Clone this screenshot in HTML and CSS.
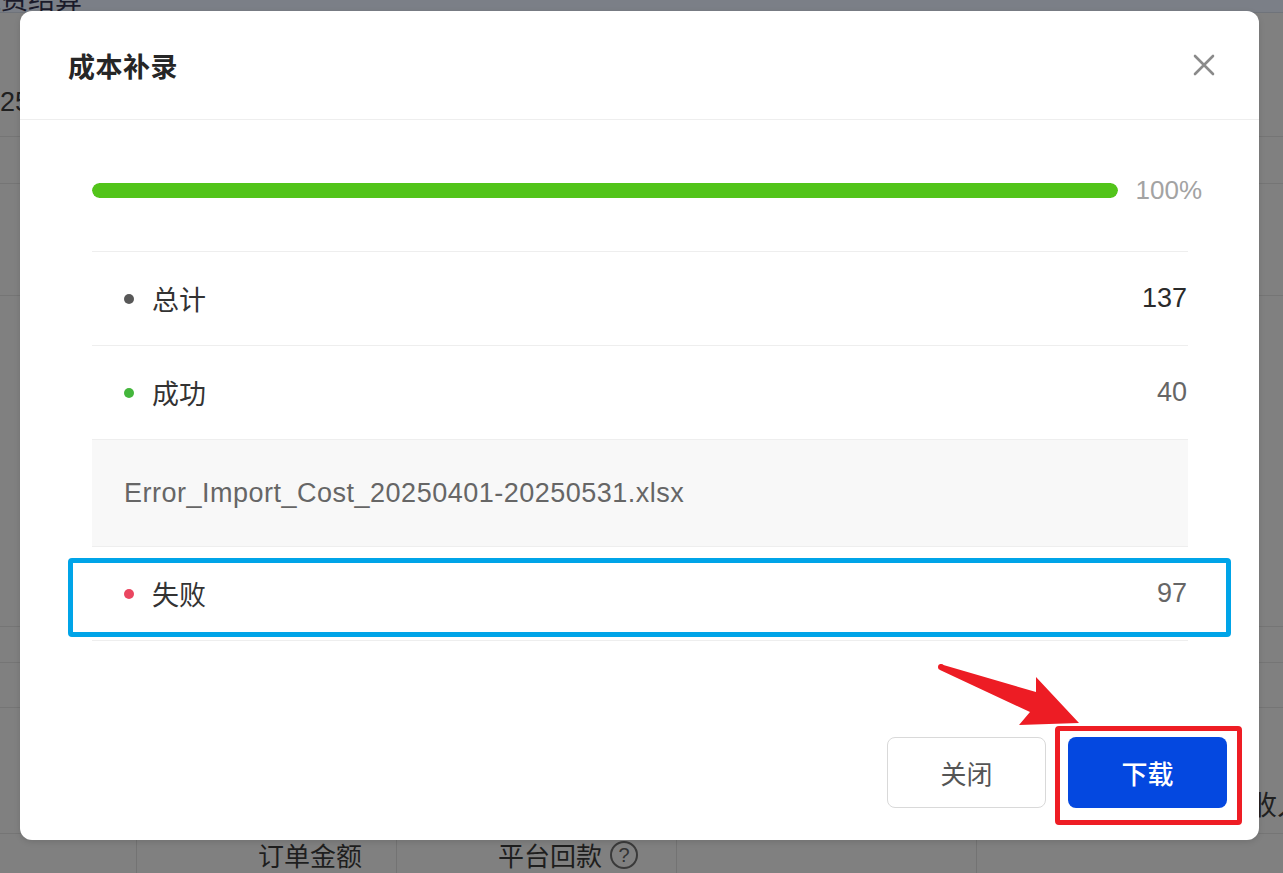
FILE: index.html
```html
<!DOCTYPE html>
<html lang="zh-CN">
<head>
<meta charset="utf-8">
<title>成本补录</title>
<link rel="stylesheet" href="styles.css">
</head>
<body>
<div class="page">
  <div class="topbar"><span>运费结算</span></div>
  <div class="bg-row r1"><span class="bg-year">2025</span></div>
  <div class="bg-row r2"></div>
  <div class="bg-row r3"></div>
  <div class="bg-row r4"></div>
  <div class="bg-row r5"></div>
  <div class="bg-row r6"></div>
  <div class="bg-row r7"><span class="bg-right">收入</span></div>
  <div class="bg-head">
    <div class="bg-cell c1"></div>
    <div class="bg-cell c2">订单金额</div>
    <div class="bg-cell c3">平台回款 <span class="help">?</span></div>
    <div class="bg-cell c4"></div>
    <div class="bg-cell c5"></div>
  </div>
</div>

<div class="modal">
  <div class="modal-header">
    <div class="modal-title">成本补录</div>
    <svg class="close-icon" width="24" height="24" viewBox="0 0 24 24">
      <path d="M3 3 L21 21 M21 3 L3 21" stroke="#8a8a8a" stroke-width="2.6" stroke-linecap="round" fill="none"/>
    </svg>
  </div>
  <div class="modal-body">
    <div class="progress">
      <div class="progress-track"><div class="progress-fill" style="width:100%"></div></div>
      <span class="progress-text">100%</span>
    </div>
    <div class="list">
      <div class="row">
        <span class="dot dot-grey"></span>
        <span class="label">总计</span>
        <span class="num num-dark">137</span>
      </div>
      <div class="row">
        <span class="dot dot-green"></span>
        <span class="label">成功</span>
        <span class="num">40</span>
      </div>
      <div class="file-box">Error_Import_Cost_20250401-20250531.xlsx</div>
      <div class="row">
        <span class="dot dot-red"></span>
        <span class="label">失败</span>
        <span class="num">97</span>
      </div>
    </div>
  </div>
  <div class="modal-footer">
    <button class="btn btn-default">关闭</button>
    <button class="btn btn-primary">下载</button>
  </div>
  <div class="mark mark-blue"></div>
  <div class="mark mark-red"></div>
</div>

<svg class="arrow" width="1283" height="873" viewBox="0 0 1283 873">
  <polygon points="940,664 1036,692 1036,677 1079,723 1019,725 1030,712 940,670" fill="#ed1c24"/>
  <circle cx="941" cy="667" r="3" fill="#ed1c24"/>
</svg>
</body>
</html>
```

FILE: styles.css
```css
html, body {
  margin: 0;
  padding: 0;
}
body {
  width: 1283px;
  height: 873px;
  overflow: hidden;
  position: relative;
  background: #808080;
  font-family: "Liberation Sans", "Noto Sans CJK SC", sans-serif;
}

/* background page (dimmed) */
.page {
  height: 873px;
  display: flex;
  flex-direction: column;
  color: #1e1e1e;
}
.topbar {
  height: 12px;
  background: #7b7f87;
  overflow: hidden;
  border-bottom: 1px solid #6f737a;
}
.topbar span {
  display: block;
  margin: -15px 0 0 -26px;
  font-size: 27px;
  line-height: 30px;
  color: #1a1a2a;
  white-space: nowrap;
}
.bg-row {
  border-bottom: 1px solid #757575;
  position: relative;
}
.r1 { height: 123px; }
.r2 { height: 46px; }
.r3 { height: 112px; }
.r4 { height: 330px; }
.r5 { height: 36px; }
.r6 { height: 44px; }
.r7 { height: 125px; }
.bg-year {
  position: absolute;
  left: -30px;
  top: 74px;
  font-size: 27px;
  color: #202020;
  white-space: nowrap;
}
.bg-right {
  position: absolute;
  left: 1250px;
  top: 76px;
  font-size: 27px;
  color: #202020;
  white-space: nowrap;
}
.bg-head {
  flex: 1;
  display: flex;
  align-items: stretch;
}
.bg-cell {
  display: flex;
  align-items: center;
  border-right: 1px solid #737373;
  font-size: 26px;
  color: #1e1e1e;
  box-sizing: border-box;
  padding-top: 2px;
}
.c1 { width: 137px; }
.c2 { width: 260px; padding-left: 121px; }
.c3 { width: 280px; padding-left: 101px; gap: 8px; }
.c4 { width: 300px; }
.c5 { flex: 1; border-right: none; }
.help {
  width: 24px;
  height: 24px;
  border: 2px solid #3a3a3a;
  border-radius: 50%;
  font-size: 20px;
  line-height: 24px;
  text-align: center;
  color: #333;
}

/* modal */
.modal {
  position: absolute;
  left: 20px;
  top: 11px;
  width: 1239px;
  height: 829px;
  background: #fff;
  border-radius: 12px;
  display: flex;
  flex-direction: column;
  box-shadow: 0 2px 6px rgba(0,0,0,0.12);
}
.modal-header {
  height: 108px;
  border-bottom: 1px solid #eeeeee;
  display: flex;
  align-items: center;
  justify-content: space-between;
  padding: 0 43px 0 48px;
}
.modal-title {
  font-size: 27px;
  font-weight: 600;
  color: #262626;
  letter-spacing: 0.5px;
}
.modal-body {
  padding: 0 71px 0 72px;
}
.progress {
  margin-top: 56px;
  margin-right: -14px;
  height: 29px;
  display: flex;
  align-items: center;
  gap: 18px;
}
.progress-track {
  flex: 1;
  height: 15px;
  border-radius: 8px;
  background: #f0f0f0;
  overflow: hidden;
}
.progress-fill {
  height: 100%;
  background: #52c41a;
  border-radius: 8px;
}
.progress-text {
  font-size: 26px;
  color: #a3a3a3;
  line-height: 29px;
}
.list {
  margin-top: 46px;
  border-top: 1px solid #eeeeee;
}
.row {
  height: 93px;
  border-bottom: 1px solid #eeeeee;
  display: flex;
  align-items: center;
  padding: 0 1px 0 32px;
}
.dot {
  width: 10px;
  height: 10px;
  border-radius: 50%;
  margin-right: 18px;
}
.dot-grey { background: #585858; }
.dot-green { background: #44b63c; }
.dot-red { background: #ea4660; }
.label {
  font-size: 27px;
  color: #333;
  flex: 1;
}
.num {
  font-size: 27px;
  color: #666;
}
.num-dark {
  color: #2a2a2a;
}
.file-box {
  height: 106px;
  background: #f8f8f8;
  border-bottom: 1px solid #eeeeee;
  display: flex;
  align-items: center;
  padding-left: 32px;
  font-size: 27px;
  letter-spacing: 0.5px;
  color: #666;
}
.modal-footer {
  margin-top: auto;
  display: flex;
  justify-content: flex-end;
  gap: 22px;
  padding: 0 32px 32px 0;
}
.btn {
  width: 159px;
  height: 71px;
  border-radius: 8px;
  font-family: "Liberation Sans", "Noto Sans CJK SC", sans-serif;
  font-size: 26px;
  cursor: pointer;
}
.btn-default {
  background: #fff;
  border: 1.5px solid #d9d9d9;
  color: #555;
}
.btn-primary {
  background: #0448e0;
  border: none;
  color: #fff;
  font-weight: 500;
}

/* annotations */
.mark {
  position: absolute;
  box-sizing: border-box;
  border-radius: 4px;
  pointer-events: none;
}
.mark-blue {
  left: 48px;
  top: 547px;
  width: 1163px;
  height: 79px;
  border: 5px solid #00a4e8;
}
.mark-red {
  left: 1035px;
  top: 715px;
  width: 187px;
  height: 99px;
  border: 5px solid #ee1d24;
}
.arrow {
  position: absolute;
  left: 0;
  top: 0;
  pointer-events: none;
}
```
